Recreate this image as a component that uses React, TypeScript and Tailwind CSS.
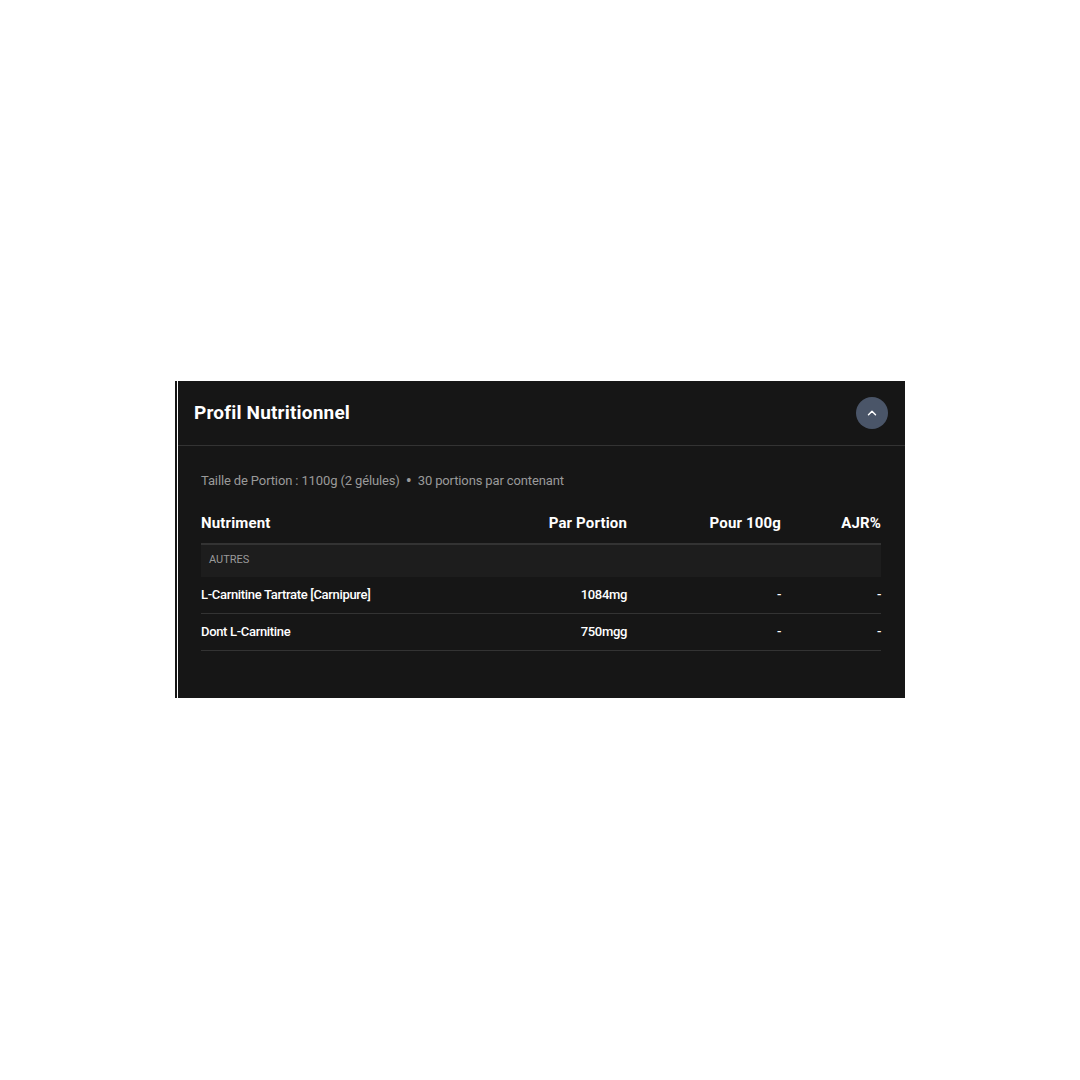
import { ChevronUp } from "lucide-react";

interface NutrientRow {
  name: string;
  portion: string;
  per100: string;
  ajr: string;
}

const ROWS: NutrientRow[] = [
  { name: "L-Carnitine Tartrate [Carnipure]", portion: "1084mg", per100: "-", ajr: "-" },
  { name: "Dont L-Carnitine", portion: "750mgg", per100: "-", ajr: "-" },
];

const grid = "grid grid-cols-[1fr_154px_154px_100px] items-center";

function NutritionTable() {
  return (
    <div className="flex flex-col">
      <div className={`${grid} h-[40px] border-b-2 border-[#333333] text-[15px] font-bold tracking-[0.01em] text-white`}>
        <span>Nutriment</span>
        <span className="text-right">Par Portion</span>
        <span className="text-right">Pour 100g</span>
        <span className="text-right">AJR%</span>
      </div>
      <div className="flex h-[32px] items-center bg-[#1d1d1d] px-2 text-[11px] uppercase text-[#9a9a9a]">
        Autres
      </div>
      {ROWS.map((row) => (
        <div
          key={row.name}
          className={`${grid} h-[37px] border-b border-[#333333] text-[13px] font-medium tracking-tight text-white`}
        >
          <span>{row.name}</span>
          <span className="text-right">{row.portion}</span>
          <span className="text-right">{row.per100}</span>
          <span className="text-right">{row.ajr}</span>
        </div>
      ))}
    </div>
  );
}

export default function App() {
  return (
    <div
      className="flex h-[1080px] w-[1080px] flex-col bg-white pl-[175px] pt-[381px]"
      style={{ fontFamily: "Roboto, 'Noto Sans', sans-serif" }}
    >
      <div className="flex h-[317px] w-[730px] gap-px">
        <div className="w-[2px] bg-[#161616]" />
        <section className="flex flex-1 flex-col bg-[#161616]">
          <header className="flex h-[65px] items-center justify-between border-b border-[#333333] pl-4 pr-[17px]">
            <h2 className="text-[19px] font-bold tracking-[0.01em] text-white">Profil Nutritionnel</h2>
            <button className="flex h-8 w-8 items-center justify-center rounded-full bg-[#4a5568] text-white">
              <ChevronUp size={14} strokeWidth={2.5} />
            </button>
          </header>
          <div className="flex flex-col pl-[23px] pr-6 pt-[25px]">
            <p className="flex items-center text-[13px] tracking-[-0.01em] text-[#9a9a9a]">
              Taille de Portion : 1100g (2 gélules)
              <span className="mx-[6px] text-[18px] leading-none">•</span>
              30 portions par contenant
            </p>
            <div className="mt-[14px]">
              <NutritionTable />
            </div>
          </div>
        </section>
      </div>
    </div>
  );
}
